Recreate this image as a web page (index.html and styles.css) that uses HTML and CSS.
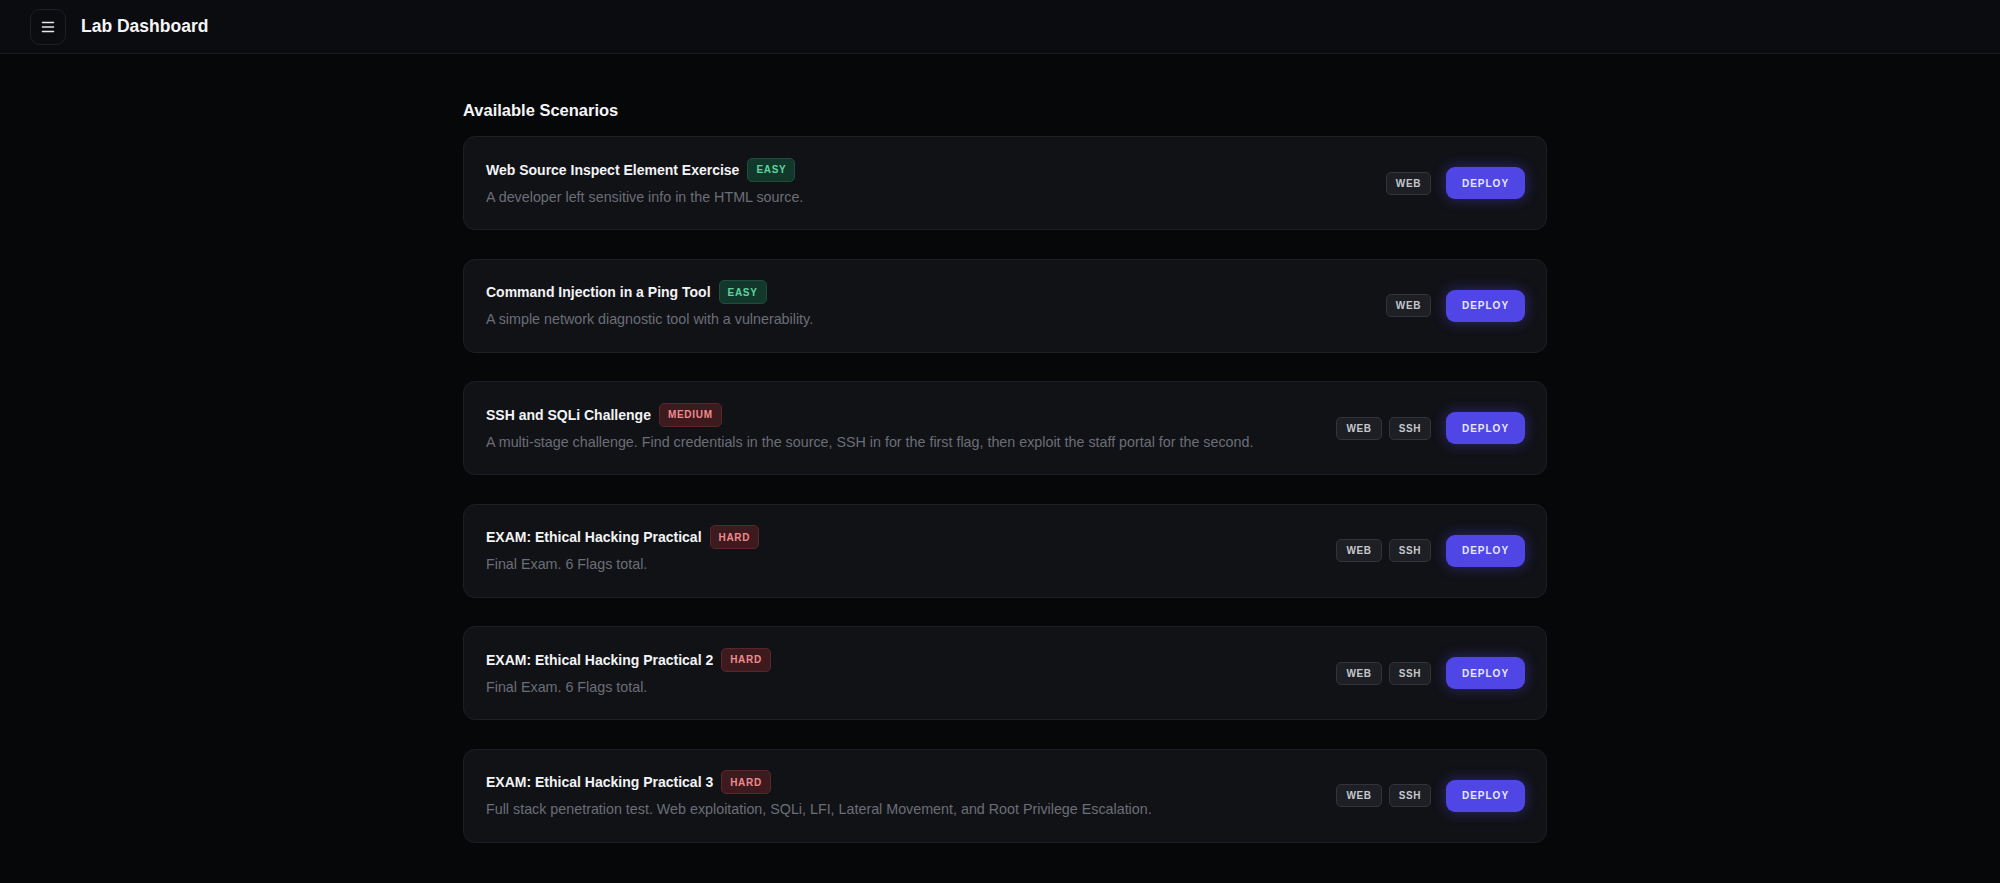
FILE: index.html
```html
<!DOCTYPE html>
<html lang="en">
<head>
    <meta charset="UTF-8" />
    <meta name="viewport" content="width=device-width, initial-scale=1.0"/>
    <title>Lab Dashboard</title>
    <link rel="stylesheet" href="styles.css">
</head>
<body>
    <header class="topbar">
        <button class="menu-btn" aria-label="Menu">
            <svg width="16" height="16" viewBox="0 0 16 16" fill="none" stroke="#e5e7eb" stroke-width="1.6" stroke-linecap="round">
                <line x1="2.5" y1="3.5" x2="13.5" y2="3.5"/>
                <line x1="2.5" y1="8" x2="13.5" y2="8"/>
                <line x1="2.5" y1="12.5" x2="13.5" y2="12.5"/>
            </svg>
        </button>
        <h1 class="app-title">Lab Dashboard</h1>
    </header>

    <main class="main">
        <div class="container">
            <h2 class="section-title">Available Scenarios</h2>

            <div class="scenario-list">
                <div class="card">
                    <div class="card-info">
                        <div class="card-title">Web Source Inspect Element Exercise <span class="badge easy">EASY</span></div>
                        <p class="card-desc">A developer left sensitive info in the HTML source.</p>
                    </div>
                    <div class="card-actions">
                        <div class="tags"><span class="tag">WEB</span></div>
                        <button class="deploy">DEPLOY</button>
                    </div>
                </div>

                <div class="card">
                    <div class="card-info">
                        <div class="card-title">Command Injection in a Ping Tool <span class="badge easy">EASY</span></div>
                        <p class="card-desc">A simple network diagnostic tool with a vulnerability.</p>
                    </div>
                    <div class="card-actions">
                        <div class="tags"><span class="tag">WEB</span></div>
                        <button class="deploy">DEPLOY</button>
                    </div>
                </div>

                <div class="card">
                    <div class="card-info">
                        <div class="card-title">SSH and SQLi Challenge <span class="badge hard">MEDIUM</span></div>
                        <p class="card-desc">A multi-stage challenge. Find credentials in the source, SSH in for the first flag, then exploit the staff portal for the second.</p>
                    </div>
                    <div class="card-actions">
                        <div class="tags"><span class="tag">WEB</span><span class="tag">SSH</span></div>
                        <button class="deploy">DEPLOY</button>
                    </div>
                </div>

                <div class="card">
                    <div class="card-info">
                        <div class="card-title">EXAM: Ethical Hacking Practical <span class="badge hard">HARD</span></div>
                        <p class="card-desc">Final Exam. 6 Flags total.</p>
                    </div>
                    <div class="card-actions">
                        <div class="tags"><span class="tag">WEB</span><span class="tag">SSH</span></div>
                        <button class="deploy">DEPLOY</button>
                    </div>
                </div>

                <div class="card">
                    <div class="card-info">
                        <div class="card-title">EXAM: Ethical Hacking Practical 2 <span class="badge hard">HARD</span></div>
                        <p class="card-desc">Final Exam. 6 Flags total.</p>
                    </div>
                    <div class="card-actions">
                        <div class="tags"><span class="tag">WEB</span><span class="tag">SSH</span></div>
                        <button class="deploy">DEPLOY</button>
                    </div>
                </div>

                <div class="card">
                    <div class="card-info">
                        <div class="card-title">EXAM: Ethical Hacking Practical 3 <span class="badge hard">HARD</span></div>
                        <p class="card-desc">Full stack penetration test. Web exploitation, SQLi, LFI, Lateral Movement, and Root Privilege Escalation.</p>
                    </div>
                    <div class="card-actions">
                        <div class="tags"><span class="tag">WEB</span><span class="tag">SSH</span></div>
                        <button class="deploy">DEPLOY</button>
                    </div>
                </div>
            </div>
        </div>
    </main>
</body>
</html>
```

FILE: styles.css
```css
body {
    font-family: 'Liberation Sans', Arial, sans-serif;
    background: #060709;
    color: #f3f4f6;
    margin: 0;
    padding: 0;
}
.topbar {
    height: 54px;
    box-sizing: border-box;
    display: flex;
    align-items: center;
    gap: 15px;
    padding: 0 30px;
    background: #0b0c10;
    border-bottom: 1px solid #1c1d22;
}
.menu-btn {
    width: 36px;
    height: 36px;
    display: flex;
    align-items: center;
    justify-content: center;
    background: #0b0c10;
    border: 1px solid #1f2026;
    border-radius: 10px;
    padding: 0;
    cursor: pointer;
}
.app-title {
    margin: 0;
    font-size: 17.5px;
    font-weight: 700;
    color: #f5f5f7;
}
.main {
    padding: 44px 0 40px 10px;
}
.container {
    max-width: 1084px;
    margin: 0 auto;
}
.section-title {
    margin: 0 0 14px;
    font-size: 16.5px;
    line-height: 24px;
    font-weight: 700;
    color: #f5f5f7;
}
.scenario-list {
    display: flex;
    flex-direction: column;
    gap: 28.5px;
}
.card {
    display: flex;
    align-items: center;
    justify-content: space-between;
    padding: 20.5px 21px 22.5px 22px;
    background: #111216;
    border: 1px solid #1e1f25;
    border-radius: 12px;
}
.card-title {
    display: flex;
    align-items: center;
    gap: 8px;
    height: 24px;
    font-size: 14px;
    font-weight: 700;
    color: #f3f4f6;
}
.card-desc {
    margin: 5px 0 0;
    font-size: 14.3px;
    line-height: 20px;
    color: #6b6e77;
}
.badge {
    display: inline-flex;
    align-items: center;
    height: 22px;
    padding: 0 8px;
    border-radius: 5px;
    font-size: 10px;
    font-weight: 700;
    letter-spacing: 0.7px;
}
.badge.easy {
    background: #12372b;
    border: 1px solid #1d4d3b;
    color: #5fd39f;
}
.badge.hard {
    background: #3d1a1d;
    border: 1px solid #5a262b;
    color: #f08a8f;
}
.card-actions {
    display: flex;
    align-items: center;
    gap: 15px;
    margin-top: 2px;
}
.tags {
    display: flex;
    gap: 7px;
}
.tag {
    display: inline-flex;
    align-items: center;
    height: 21px;
    padding: 0 9px;
    background: #1d1f24;
    border: 1px solid #32343a;
    border-radius: 5px;
    font-size: 10px;
    font-weight: 700;
    letter-spacing: 0.6px;
    color: #c5c7cd;
}
.deploy {
    width: 79px;
    height: 32px;
    background: #4f46e5;
    color: #e8e8ff;
    border: none;
    border-radius: 9px;
    font-family: inherit;
    font-size: 10px;
    font-weight: 700;
    letter-spacing: 1px;
    box-shadow: 0 0 14px rgba(79, 70, 229, 0.45);
    cursor: pointer;
}
```
